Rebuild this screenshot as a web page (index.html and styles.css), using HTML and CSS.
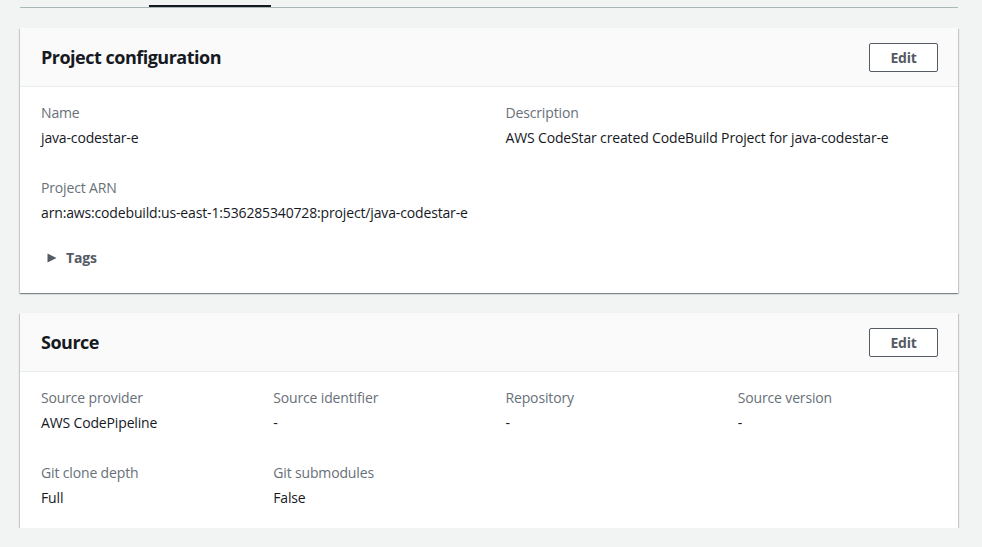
FILE: index.html
```html
<!DOCTYPE html>
<html lang="en">
<head>
<meta charset="utf-8">
<title>Build project</title>
<link rel="stylesheet" href="styles.css">
</head>
<body>
<div class="page">
  <div class="tabs">
    <div class="tab-spacer"></div>
    <div class="tab active"></div>
  </div>

  <section class="card">
    <header class="card-header">
      <h2 class="card-title">Project configuration</h2>
      <button class="btn">Edit</button>
    </header>
    <div class="card-body">
      <div class="grid grid-2">
        <div class="field">
          <div class="label">Name</div>
          <div class="value">java-codestar-e</div>
        </div>
        <div class="field">
          <div class="label">Description</div>
          <div class="value">AWS CodeStar created CodeBuild Project for java-codestar-e</div>
        </div>
        <div class="field">
          <div class="label">Project ARN</div>
          <div class="value">arn:aws:codebuild:us-east-1:536285340728:project/java-codestar-e</div>
        </div>
      </div>
      <div class="expander">
        <svg class="caret" width="10" height="10" viewBox="0 0 10 10"><polygon points="0.5,0.5 9.5,5 0.5,9.5" fill="#545b64"/></svg>
        <span class="expander-label">Tags</span>
      </div>
    </div>
  </section>

  <section class="card">
    <header class="card-header">
      <h2 class="card-title">Source</h2>
      <button class="btn">Edit</button>
    </header>
    <div class="card-body card-body-source">
      <div class="grid grid-4">
        <div class="field">
          <div class="label">Source provider</div>
          <div class="value">AWS CodePipeline</div>
        </div>
        <div class="field">
          <div class="label">Source identifier</div>
          <div class="value">-</div>
        </div>
        <div class="field">
          <div class="label">Repository</div>
          <div class="value">-</div>
        </div>
        <div class="field">
          <div class="label">Source version</div>
          <div class="value">-</div>
        </div>
        <div class="field">
          <div class="label">Git clone depth</div>
          <div class="value">Full</div>
        </div>
        <div class="field">
          <div class="label">Git submodules</div>
          <div class="value">False</div>
        </div>
      </div>
    </div>
  </section>
</div>
</body>
</html>
```

FILE: styles.css
```css
* { box-sizing: border-box; }
html, body {
  margin: 0;
  padding: 0;
  background: #f2f3f3;
  font-family: "Open Sans", "Noto Sans", Arial, sans-serif;
  font-size: 14px;
  line-height: 22px;
  letter-spacing: -0.15px;
  color: #16191f;
}
.page {
  padding: 0 24px 0 20px;
  width: 982px;
}
.tabs {
  display: flex;
  height: 8px;
  border-bottom: 1px solid #aab7b8;
}
.tab-spacer { width: 129px; }
.tab.active {
  width: 122px;
  height: 7px;
  border-bottom: 2px solid #16191f;
}
.card {
  background: #fff;
  margin-top: 20px;
  box-shadow: 0 1px 1px 0 rgba(0, 28, 36, 0.3), 1px 1px 1px 0 rgba(0, 28, 36, 0.15), -1px 1px 1px 0 rgba(0, 28, 36, 0.15);
}
.card-header {
  display: flex;
  align-items: center;
  justify-content: space-between;
  height: 59px;
  padding: 0 20px 0 21px;
  background: #fafafa;
  border-bottom: 1px solid #eaeded;
}
.card-title {
  margin: 0;
  font-size: 18px;
  font-weight: 700;
  line-height: 22px;
  letter-spacing: -0.5px;
  color: #16191f;
}
.btn {
  width: 69px;
  height: 29px;
  margin-top: 1px;
  background: #fff;
  border: 1px solid #545b64;
  border-radius: 2px;
  font-family: inherit;
  font-size: 14px;
  font-weight: 700;
  letter-spacing: -0.2px;
  color: #545b64;
  padding: 0;
}
.card-body {
  padding: 15px 20px 24px 21px;
}
.card-body-source {
  padding-bottom: 19px;
}
.grid {
  display: grid;
  column-gap: 32px;
  row-gap: 28px;
}
.grid-2 { grid-template-columns: 1fr 1fr; }
.grid-4 { grid-template-columns: repeat(4, 1fr); }
.label {
  color: #687078;
  margin-bottom: 3px;
}
.value {
  color: #16191f;
}
.expander {
  display: flex;
  align-items: center;
  margin-top: 23px;
  padding-left: 6px;
}
.caret {
  flex: none;
  margin-right: 9px;
}
.expander-label {
  font-weight: 700;
  color: #545b64;
}
```
